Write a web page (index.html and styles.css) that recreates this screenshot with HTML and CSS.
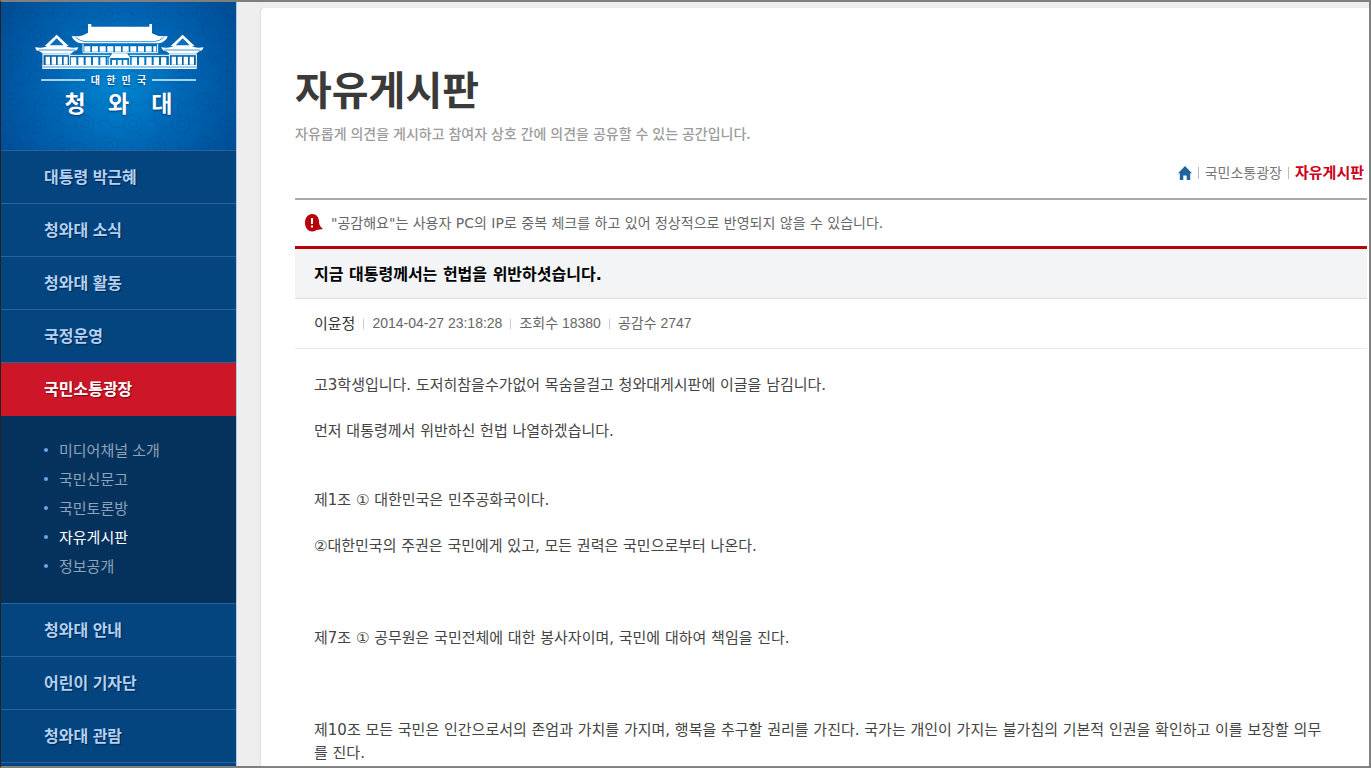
FILE: index.html
```html
<!DOCTYPE html>
<html lang="ko">

<head>
  <meta charset="utf-8">
  <title>자유게시판</title>
  <link rel="stylesheet" href="styles.css">
</head>

<body>
  <div class="page">
    <div class="sidebar">
      <a class="logo" href="#">
        <svg class="logo-pattern" aria-hidden="true">
          <defs>
            <pattern id="cloud" width="48" height="44" patternUnits="userSpaceOnUse">
              <g fill="none" stroke="#003a7c" stroke-opacity="0.22">
                <circle cx="12" cy="12" r="9" />
                <circle cx="12" cy="12" r="4" />
                <circle cx="36" cy="34" r="9" />
                <circle cx="36" cy="34" r="4" />
                <path d="M21 12q8-8 15 0t12 0M0 34q6-8 13 0t14 0M12 21q-6 6 0 12M36 25q-6-6 0-14" />
              </g>
            </pattern>
          </defs>
          <rect width="100%" height="100%" fill="url(#cloud)" />
        </svg>
        <svg class="logo-house" viewBox="99 69 510 141" aria-hidden="true">
          <g fill="#fff">
            <path d="M261 72h10v8h174v-8h8v28q20 12 47 8l-3 8q-10 12-26 14H242q-16-2-26-14l-4-8q28 4 49-10z" />
            <path d="M167 104l36 34h-72z" />
            <path d="M545 104l36 34h-72z" />
            <path d="M102 142q30 4 40-6h50q10 10 40 6l-4 8q-12 4-18 11H126q-8-8-20-10z" />
            <path d="M480 142q30 4 40-6h50q10 10 38 6l-4 8q-12 4-18 11h-80q-8-8-20-10z" />
            <path d="M124 195h463v12H124z" />
            <path d="M334 160h44l10 14h-64z" />
          </g>
          <g fill="#0b6dbb">
            <path d="M167 115l21 21h-42z" />
            <path d="M545 115l21 21h-42z" />
          </g>
          <g fill="none" stroke="#3c93d6" stroke-width="3">
            <path d="M224 113q14 10 28 12h208q16-2 28-12M112 150h112M490 150h108M126 201h459" />
          </g>
          <g fill="none" stroke="#fff" stroke-width="3">
            <path d="M246 132v26h224v-26M124 164h84M504 164h83M126 164v32M206 164v32M505 164v32M586 164v32M206 166h120M386 166h118M326 174v22M386 174v22" />
          </g>
          <g fill="none" stroke="#fff" stroke-width="17">
            <path d="M250 147h216" stroke-dasharray="18 5" />
          </g>
          <g fill="none" stroke="#fff" stroke-width="24">
            <path d="M134 182h66M512 182h68" stroke-dasharray="13 5" />
            <path d="M210 184h112M392 184h110" stroke-dasharray="16 6" />
            <path d="M333 188h50" stroke-width="16" stroke-dasharray="12 5" />
          </g>
        </svg>
        <span class="logo-country"><i></i><b>대</b><b>한</b><b>민</b><b>국</b><i></i></span>
        <span class="logo-name"><b>청</b><b>와</b><b>대</b></span>
      </a>
      <ul class="menu">
        <li><a href="#">대통령 박근혜</a></li>
        <li><a href="#">청와대 소식</a></li>
        <li><a href="#">청와대 활동</a></li>
        <li><a href="#">국정운영</a></li>
        <li class="active"><a href="#">국민소통광장</a>
          <ul class="submenu">
            <li><a href="#">미디어채널 소개</a></li>
            <li><a href="#">국민신문고</a></li>
            <li><a href="#">국민토론방</a></li>
            <li><a class="on" href="#">자유게시판</a></li>
            <li><a href="#">정보공개</a></li>
          </ul>
        </li>
        <li><a href="#">청와대 안내</a></li>
        <li><a href="#">어린이 기자단</a></li>
        <li class="last"><a href="#">청와대 관람</a></li>
      </ul>
    </div>

    <div class="content">
      <h1>자유게시판</h1>
      <p class="desc">자유롭게 의견을 게시하고 참여자 상호 간에 의견을 공유할 수 있는 공간입니다.</p>
      <div class="location">
        <a class="home" href="#" aria-label="홈">
          <svg width="14" height="14" viewBox="0 0 14 14">
            <path fill="#1f639f" d="M7 0l7 7.200h-1.800V14H8.700V9.500H5.300V14H1.800V7.200H0z" />
          </svg>
        </a>
        <a class="step" href="#">국민소통광장</a>
        <a class="step here" href="#">자유게시판</a>
      </div>

      <div class="notice">
        <svg width="18" height="18" viewBox="0 0 18 18" aria-hidden="true">
          <path fill="#b70007" d="M7 0C11.500 0 14 3.500 14 7.500c0 2 .500 3.500 1.500 5l2.500 2.500-6.500 1C10 17 8.500 17.500 7 17.500 3 17.500 0 13.500 0 8.700S3 0 7 0z" />
          <path stroke="#fff" stroke-width="2" d="M7 4v6M7 11.500v2" />
        </svg>
        "공감해요"는 사용자 PC의 IP로 중복 체크를 하고 있어 정상적으로 반영되지 않을 수 있습니다.
      </div>
      <h2>지금 대통령께서는 헌법을 위반하셧습니다.</h2>
      <div class="info">
        <span class="writer">이윤정</span>
        <span>2014-04-27 23:18:28</span>
        <span>조회수 18380</span>
        <span>공감수 2747</span>
      </div>
      <div class="article">
        고3학생입니다. 도저히참을수가없어 목숨을걸고 청와대게시판에 이글을 남김니다.<br><br>
        먼저 대통령께서 위반하신 헌법 나열하겠습니다.<br><br><br>
        제1조 ① 대한민국은 민주공화국이다.<br><br>
        ②대한민국의 주권은 국민에게 있고, 모든 권력은 국민으로부터 나온다.<br><br><br><br>
        제7조 ① 공무원은 국민전체에 대한 봉사자이며, 국민에 대하여 책임을 진다.<br><br><br><br>
        제10조 모든 국민은 인간으로서의 존엄과 가치를 가지며, 행복을 추구할 권리를 가진다. 국가는 개인이 가지는 불가침의 기본적 인권을 확인하고 이를 보장할 의무를 진다.
      </div>
    </div>
  </div>
</body>

</html>
```
FILE: styles.css
```css
* {
  box-sizing: border-box;
}

body {
  margin: 0;
  background-color: #eeeeee;
  font-family: "Liberation Sans", "Noto Sans CJK KR", sans-serif;
  font-size: 14px;
  color: #666666;
}

a {
  color: inherit;
  text-decoration: none;
}

ul {
  margin: 0;
  padding: 0;
  list-style: none;
}

.page {
  display: flex;
  min-height: 100vh;
  border: 2px solid #7f7f7f;
  border-left: 1px solid #222222;
}

/* left menu */

.sidebar {
  flex: none;
  width: 236px;
  background-color: #044580;
  border-right: 1px solid #b5cbe0;
  font-family: "Noto Sans CJK KR", sans-serif;
}

.logo {
  position: relative;
  display: flex;
  flex-direction: column;
  align-items: center;
  height: 148px;
  padding-top: 21px;
  background: radial-gradient(circle at 50% 55%, #0088d4 0, #0066b4 45%, #004a92 100%);
  color: white;
  text-shadow: 0 1px 2px #003a7c;
}

.logo-pattern {
  position: absolute;
  top: 0;
  left: 0;
  width: 100%;
  height: 100%;
}

.logo-house {
  position: relative;
  width: 170px;
  height: 47px;
}

.logo-country {
  position: relative;
  display: flex;
  justify-content: space-between;
  align-items: center;
  width: 156px;
  margin-top: 2px;
  font-size: 10px;
  line-height: 16px;
}

.logo-country i {
  width: 44px;
  height: 2px;
  background-color: #a5d3f2;
}

.logo-name {
  position: relative;
  display: flex;
  justify-content: space-between;
  width: 108px;
  font-size: 23px;
  line-height: 28px;
}

.menu > li {
  border-top: 1px solid #2a639b;
}

.menu > li > a {
  display: block;
  padding: 0 0 2px 43px;
  font-size: 16px;
  font-weight: bold;
  line-height: 50px;
  color: #b1d2f6;
  text-shadow: 1px 1px 1px #02244a;
}

.menu > .active > a {
  padding-bottom: 3px;
  background-color: #cd1627;
  color: white;
  text-shadow: 1px 1px 1px #7c0a16;
}

.submenu {
  padding: 19px 0 23px 43px;
  background-color: #05325d;
}

.submenu li {
  display: flex;
  align-items: center;
  gap: 11px;
  font-size: 15px;
  line-height: 29px;
  color: #8fa3b8;
}

.submenu li::before {
  content: "";
  width: 4px;
  height: 4px;
  border-radius: 2px;
  background-color: #66a9e6;
}

.submenu .on {
  color: white;
}

.menu > .last {
  border-bottom: 1px solid #2a639b;
}

/* board */

.content {
  flex: 1;
  margin: 6px 0 0 24px;
  padding: 52px 2px 0 34px;
  background-color: white;
  border-top-left-radius: 4px;
  box-shadow: -1px 0 1px #dddddd;
}

h1 {
  margin: 0;
  font-family: "Noto Sans CJK KR", sans-serif;
  font-size: 40px;
  font-weight: bold;
  line-height: 56px;
  color: #3a3a3a;
}

.desc {
  margin: 6px 0 19px;
  font-family: "Noto Sans CJK KR", sans-serif;
  font-weight: 500;
  line-height: 22px;
  color: #9c9c9c;
}

.location {
  display: flex;
  justify-content: flex-end;
  align-items: center;
  margin-bottom: 15px;
  padding-right: 3px;
  line-height: 20px;
  color: #777777;
}

.home {
  display: flex;
}

.step {
  display: flex;
  align-items: center;
}

.step::before {
  content: "";
  width: 1px;
  height: 12px;
  margin: 0 6px;
  background-color: #bbbbbb;
}

.here {
  font-size: 15px;
  font-weight: bold;
  color: #cc0019;
}

.notice {
  display: flex;
  align-items: center;
  gap: 8px;
  padding: 0 10px;
  border-top: 2px solid #a9a9a9;
  border-bottom: 3px solid #b90005;
  font-family: "DejaVu Sans", "Noto Sans CJK KR", sans-serif;
  line-height: 46px;
}

h2 {
  margin: 0;
  padding: 2px 0 0 19px;
  background-color: #f3f4f6;
  border-bottom: 1px solid #dddddd;
  font-family: "DejaVu Sans", "Noto Sans CJK KR", sans-serif;
  font-size: 16px;
  line-height: 47px;
  color: black;
}

.info {
  display: flex;
  align-items: center;
  padding-left: 19px;
  border-bottom: 1px solid #e8e8e8;
  line-height: 49px;
}

.info span {
  display: flex;
  align-items: center;
}

.info span + span::before {
  content: "";
  width: 1px;
  height: 10px;
  margin: 0 8px;
  background-color: #cccccc;
}

.info .writer {
  font-size: 15px;
  color: #333333;
}

.article {
  padding: 25px 40px 0 19px;
  font-family: "DejaVu Sans", "Noto Sans CJK KR", sans-serif;
  font-size: 15px;
  line-height: 23px;
  color: #444444;
}
```
